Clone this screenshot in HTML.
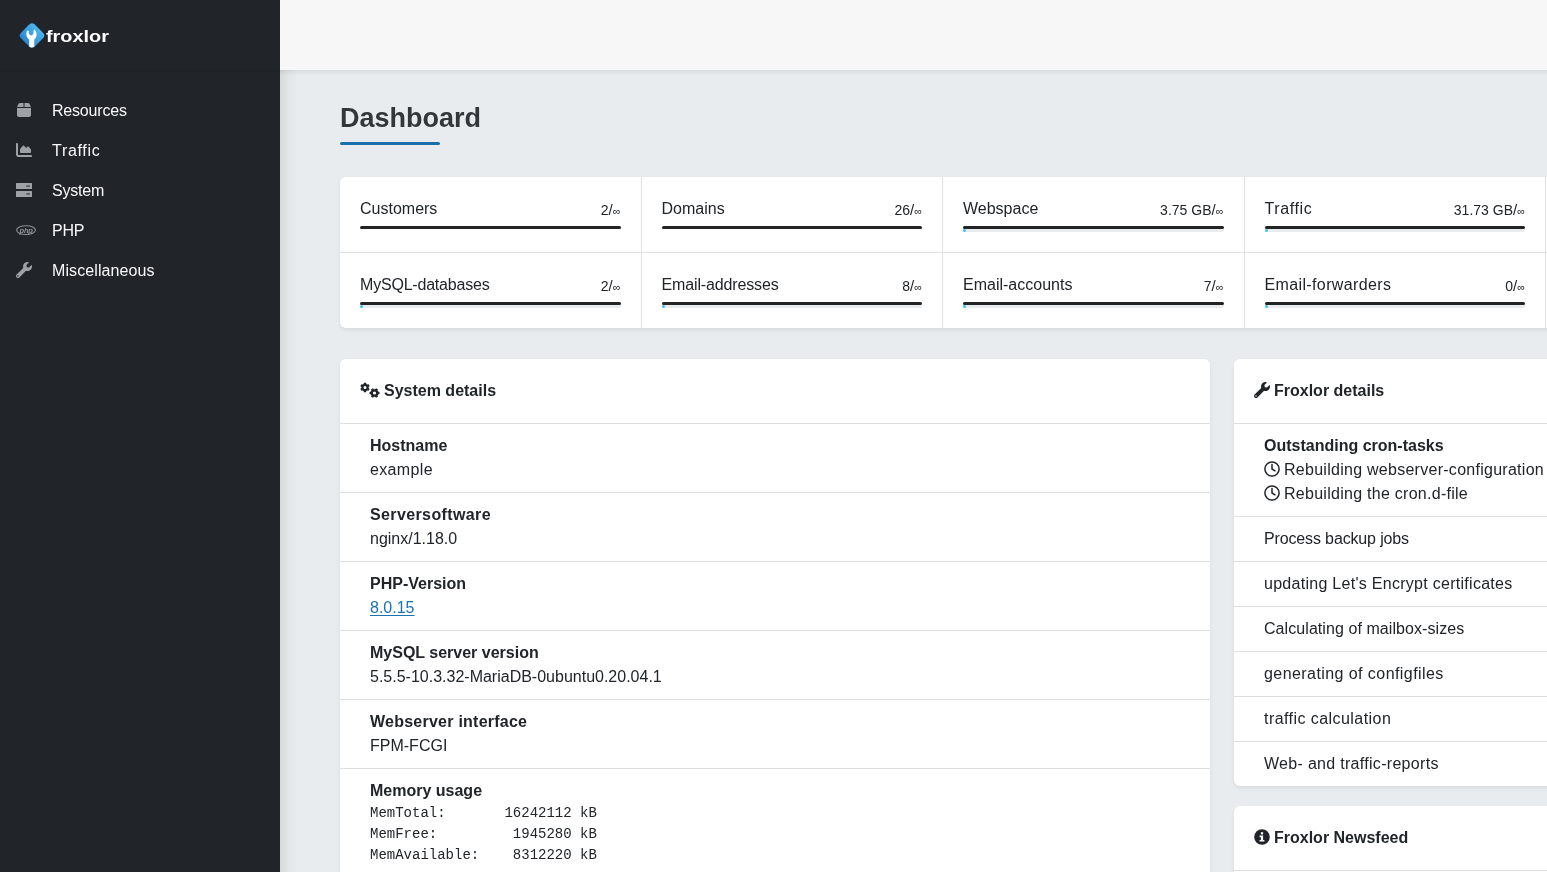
<!DOCTYPE html>
<html><head><meta charset="utf-8">
<style>
*{box-sizing:border-box;margin:0;padding:0}
html,body{width:1547px;height:872px;overflow:hidden}
body{font-family:"Liberation Sans",sans-serif;font-size:16px;line-height:24px;color:#212529;background:#e9ecef;position:relative}
#side{position:absolute;left:0;top:0;width:280px;height:872px;background:#212529}
#side .brand{position:absolute;left:0;top:0;width:280px;height:70px;background:#212529;box-shadow:0 1px 2px rgba(0,0,0,.12)}
#logo{position:absolute;left:16px;top:20px}
#logotext{position:absolute;left:46px;top:27px;color:#fff;font-weight:bold;font-size:17px;line-height:20px;letter-spacing:0px;transform:scaleX(1.17);transform-origin:0 0}
.nav{position:absolute;left:0;width:280px;height:40px}
.nav .ic{position:absolute;left:16px;top:0;width:16px;height:16px}
.nav .tx{position:absolute;left:52px;top:1px;letter-spacing:-0.2px;color:#f8f9fa;font-size:16px;line-height:24px}
#top{position:absolute;left:280px;top:0;width:1267px;height:70px;background:#f7f7f7}
#mainshadow{position:absolute;left:280px;top:70px;width:18px;height:802px;background:linear-gradient(90deg,rgba(0,0,0,.075),rgba(0,0,0,.03) 40%,rgba(0,0,0,0))}
#topshadow{position:absolute;left:280px;top:70px;width:1267px;height:5px;background:linear-gradient(180deg,rgba(0,0,0,.07),rgba(0,0,0,0))}
h1{position:absolute;left:340px;top:101.5px;font-size:27px;line-height:32px;font-weight:bold;color:#33373b;letter-spacing:0px}
#uline{position:absolute;left:340px;top:142px;width:100px;height:3px;border-radius:2px;background:#1b6fab}
.card{position:absolute;background:#fff;border-radius:6px;box-shadow:0 2px 4px rgba(0,0,0,.075)}
#stats{left:340px;top:177px;width:1260px;height:151px;overflow:hidden}
.cell{position:absolute;width:301.5px;height:75px;padding:20px}
.cell .lbl{position:absolute;left:20px;top:20px;font-size:16px;line-height:24px;color:#212529}
.cell .val{position:absolute;right:21px;top:20.5px;font-size:14px;line-height:24px;color:#212529}
.cell .bar{position:absolute;left:20px;right:21px;top:49px;height:3px;border-radius:2px;background:#242424}
.cell .prog{position:absolute;left:20px;right:21px;top:52px;height:3px;background:#e9ecef;border-radius:0 0 2px 2px}
.cell .prog i{position:absolute;left:0;top:0;width:3px;height:3px;background:#3ec4f5;border-radius:2px}
.sl{font-size:15px}.inf{font-size:11px}
.vl{position:absolute;top:0;width:1px;height:151px;background:#dee2e6}
.hl{position:absolute;left:0;width:100%;height:1px;background:#dee2e6}
#sys{left:340px;top:359px;width:870px;height:560px}
#frox{left:1234px;top:359px;width:423px;height:427px}
#news{left:1234px;top:806px;width:423px;height:200px}
.chead{position:absolute;left:20px;top:20px;font-weight:bold;font-size:16px;line-height:24px;white-space:nowrap}
.row{position:absolute;left:0;width:100%;border-top:1px solid rgba(0,0,0,.125)}
.row .in{position:absolute;left:30px;top:10px;white-space:nowrap}
.row b{display:block;font-weight:bold}
a{color:#1c72b0;text-decoration:underline;text-underline-offset:2px}
pre{font-family:"Liberation Mono",monospace;font-size:14px;line-height:21px;color:#212529}
</style></head><body><div id="wrap" style="position:absolute;left:0;top:0;width:1547px;height:872px;will-change:transform">
<div id="side">
  <div class="brand"></div>
  <svg id="logo" width="32" height="32" viewBox="0 0 32 32">
    <defs><linearGradient id="lg" x1="0" y1="0" x2="0" y2="1"><stop offset="0" stop-color="#4cb4ee"/><stop offset="1" stop-color="#2b86cc"/></linearGradient></defs>
    <rect x="6.25" y="5.75" width="19.5" height="19.5" rx="4" transform="rotate(45 16 15.5)" fill="url(#lg)"/>
    <path d="M11.4 10.6C10 12.5 9.6 17 13.2 19.5L13.2 26.8Q15.7 28.4 18.3 26.8L18.3 19.5C21.5 17 21.3 12 18.3 9.2L17.6 10.8C17.8 13 17 15.4 15.2 15.4C13.4 15.4 12.6 13 12.8 11Z" fill="#fff"/>
  </svg>
  <div id="logotext">froxlor</div>
  <div class="nav" style="top:98px"><svg class="ic" width="14" height="16" viewBox="0 0 448 512" style="left:16px;top:4px"><path fill="#9ea1a6" d="M50.7 58.5L0 160H208V32H93.7C75.5 32 58.9 42.3 50.7 58.5zM240 160H448L397.3 58.5C389.1 42.3 372.5 32 354.3 32H240V160zm208 32H0V416c0 35.3 28.7 64 64 64H384c35.3 0 64-28.7 64-64V192z"/></svg><div class="tx">Resources</div></div>
  <div class="nav" style="top:138px"><svg class="ic" width="16" height="16" viewBox="0 0 512 512" style="left:16px;top:4px"><path fill="#9ea1a6" d="M64 64c0-17.7-14.3-32-32-32S0 46.3 0 64V400c0 44.2 35.8 80 80 80H480c17.7 0 32-14.3 32-32s-14.3-32-32-32H80c-8.8 0-16-7.2-16-16V64zm96 288H448c17.7 0 32-14.3 32-32V251.8c0-7.6-2.7-15-7.7-20.8l-65.8-76.8c-12.1-14.2-33.7-15-46.9-1.8l-21 21c-10 10-26.4 9.2-35.4-1.6l-39.2-47c-12.6-15.1-35.7-15.4-48.7-.6L135.9 215c-5.1 5.8-7.9 13.3-7.9 21.1v84c0 17.7 14.3 32 32 32z"/></svg><div class="tx" style="letter-spacing:0.7px">Traffic</div></div>
  <div class="nav" style="top:178px"><svg class="ic" width="16" height="16" viewBox="0 0 16 16" style="left:16px;top:4px"><path fill="#9ea1a6" d="M0.5 1H15.5A.5.5 0 0 1 16 1.5V6.5A.5.5 0 0 1 15.5 7H.5A.5.5 0 0 1 0 6.5V1.5A.5.5 0 0 1 .5 1zM.5 9H15.5A.5.5 0 0 1 16 9.5V14.5A.5.5 0 0 1 15.5 15H.5A.5.5 0 0 1 0 14.5V9.5A.5.5 0 0 1 .5 9z"/><path fill="#55585d" d="M10.3 3.2H13.9V4.9H10.3zM10.3 11.1H13.9V12.8H10.3z"/></svg><div class="tx">System</div></div>
  <div class="nav" style="top:218px"><svg class="ic" width="20" height="11" viewBox="0 0 20 11" style="left:16px;top:6.5px;width:20px;height:11px"><ellipse cx="10" cy="5.1" rx="9.4" ry="4.4" fill="none" stroke="#8e9196" stroke-width="1.1"/><text x="10.2" y="7.6" text-anchor="middle" font-family="Liberation Sans" font-style="italic" font-weight="bold" font-size="7.5" fill="#8e9196" letter-spacing="-0.2">php</text></svg><div class="tx">PHP</div></div>
  <div class="nav" style="top:258px"><svg class="ic" width="16" height="16" viewBox="0 0 512 512" style="left:16px;top:4px"><path fill="#9ea1a6" d="M507.73 109.1c-2.24-9.030-13.54-12.09-20.12-5.51l-74.36 74.36-67.88-11.31-11.31-67.88 74.36-74.36c6.62-6.62 3.43-17.9-5.66-20.16-47.38-11.74-99.55.91-136.58 37.93-39.64 39.64-50.55 97.1-34.05 147.2L18.74 402.76c-24.99 24.99-24.99 65.51 0 90.5 24.99 24.99 65.51 24.99 90.5 0l213.21-213.21c50.12 16.71 107.470 5.68 147.37-34.22 37.07-37.07 49.7-89.32 37.91-136.73zM64 472c-13.25 0-24-10.75-24-24 0-13.26 10.75-24 24-24s24 10.74 24 24c0 13.25-10.75 24-24 24z"/></svg><div class="tx" style="letter-spacing:0.1px">Miscellaneous</div></div>
</div>
<div id="top"></div>
<div id="mainshadow"></div><div id="topshadow"></div>
<h1>Dashboard</h1>
<div id="uline"></div>

<div class="card" id="stats">
  <div class="cell" style="left:0;top:0"><div class="lbl">Customers</div><div class="val">2<span class="sl">/</span><span class="inf">∞</span></div><div class="bar"></div></div>
  <div class="cell" style="left:301.5px;top:0"><div class="lbl">Domains</div><div class="val">26<span class="sl">/</span><span class="inf">∞</span></div><div class="bar"></div></div>
  <div class="cell" style="left:603px;top:0"><div class="lbl">Webspace</div><div class="val">3.75 GB<span class="sl">/</span><span class="inf">∞</span></div><div class="bar"></div><div class="prog"><i></i></div></div>
  <div class="cell" style="left:904.5px;top:0"><div class="lbl" style="letter-spacing:0.6px">Traffic</div><div class="val">31.73 GB<span class="sl">/</span><span class="inf">∞</span></div><div class="bar"></div><div class="prog"><i></i></div></div>
  <div class="cell" style="left:0;top:76px"><div class="lbl" style="letter-spacing:-0.2px">MySQL-databases</div><div class="val">2<span class="sl">/</span><span class="inf">∞</span></div><div class="bar"></div><div class="prog"><i></i></div></div>
  <div class="cell" style="left:301.5px;top:76px"><div class="lbl" style="letter-spacing:-0.14px">Email-addresses</div><div class="val">8<span class="sl">/</span><span class="inf">∞</span></div><div class="bar"></div><div class="prog"><i></i></div></div>
  <div class="cell" style="left:603px;top:76px"><div class="lbl">Email-accounts</div><div class="val">7<span class="sl">/</span><span class="inf">∞</span></div><div class="bar"></div><div class="prog"><i></i></div></div>
  <div class="cell" style="left:904.5px;top:76px"><div class="lbl" style="letter-spacing:0.37px">Email-forwarders</div><div class="val">0<span class="sl">/</span><span class="inf">∞</span></div><div class="bar"></div><div class="prog"><i></i></div></div>
  <div class="hl" style="top:75px"></div>
  <div class="vl" style="left:301px"></div>
  <div class="vl" style="left:602px"></div>
  <div class="vl" style="left:904px"></div>
  <div class="vl" style="left:1205px"></div>
</div>

<div class="card" id="sys">
  <svg style="position:absolute;left:20px;top:23px" width="21" height="17" viewBox="0 0 21 17"><g fill="#212529" fill-rule="evenodd"><path d="M3.61 2.07L3.93 0.72L6.07 0.72L6.39 2.07L7.28 2.58L8.61 2.18L9.68 4.03L8.66 4.99L8.66 6.01L9.68 6.97L8.61 8.82L7.28 8.42L6.39 8.93L6.07 10.28L3.93 10.28L3.61 8.93L2.72 8.42L1.39 8.82L0.32 6.97L1.34 6.01L1.34 4.99L0.32 4.03L1.39 2.18L2.72 2.58ZM3.50 5.50a1.50 1.50 0 1 0 3.00 0a1.50 1.50 0 1 0 -3.00 0ZM18.11 9.54L19.48 9.89L19.48 12.11L18.11 12.46L17.58 13.40L17.95 14.75L16.03 15.87L15.04 14.86L13.96 14.86L12.97 15.87L11.05 14.75L11.42 13.40L10.89 12.46L9.52 12.11L9.52 9.89L10.89 9.54L11.42 8.60L11.05 7.25L12.97 6.13L13.96 7.14L15.04 7.14L16.03 6.13L17.95 7.25L17.58 8.60ZM12.90 11.00a1.60 1.60 0 1 0 3.20 0a1.60 1.60 0 1 0 -3.20 0Z"/></g></svg><div class="chead" style="left:44px">System details</div>
  <div class="row" style="top:64px;height:69px"><div class="in"><b>Hostname</b><span style="letter-spacing:0.35px">example</span></div></div>
  <div class="row" style="top:133px;height:69px"><div class="in"><b style="letter-spacing:0.38px">Serversoftware</b>nginx/1.18.0</div></div>
  <div class="row" style="top:202px;height:69px"><div class="in"><b>PHP-Version</b><a>8.0.15</a></div></div>
  <div class="row" style="top:271px;height:69px"><div class="in"><b>MySQL server version</b>5.5.5-10.3.32-MariaDB-0ubuntu0.20.04.1</div></div>
  <div class="row" style="top:340px;height:69px"><div class="in"><b style="letter-spacing:0.24px">Webserver interface</b>FPM-FCGI</div></div>
  <div class="row" style="top:409px;height:200px"><div class="in"><b>Memory usage</b><pre>MemTotal:       16242112 kB
MemFree:         1945280 kB
MemAvailable:    8312220 kB</pre></div></div>
</div>

<div class="card" id="frox">
  <svg style="position:absolute;left:20px;top:23px" width="16" height="16" viewBox="0 0 512 512"><path fill="#212529" d="M507.73 109.1c-2.24-9.03-13.54-12.09-20.12-5.51l-74.36 74.36-67.88-11.31-11.31-67.88 74.36-74.36c6.62-6.62 3.43-17.9-5.66-20.16-47.38-11.74-99.55.91-136.580 37.93-39.64 39.64-50.55 97.1-34.05 147.2L18.74 402.76c-24.99 24.99-24.99 65.51 0 90.5 24.99 24.99 65.51 24.99 90.5 0l213.21-213.21c50.12 16.71 107.47 5.68 147.37-34.22 37.07-37.07 49.7-89.32 37.91-136.73zM64 472c-13.25 0-24-10.75-24-24 0-13.26 10.75-24 24-24s24 10.74 24 24c0 13.25-10.75 24-24 24z"/></svg><div class="chead" style="left:40px">Froxlor details</div>
  <div class="row" style="top:64px;height:94px"><div class="in"><b>Outstanding cron-tasks</b><svg style="display:inline-block;vertical-align:-2px;margin-right:4px" width="16" height="16" viewBox="0 0 16 16"><circle cx="8" cy="8" r="7.1" fill="none" stroke="#212529" stroke-width="1.5"/><path d="M8 3.6V8L11 9.9" fill="none" stroke="#212529" stroke-width="1.5" stroke-linecap="round"/></svg><span style="letter-spacing:0.27px">Rebuilding webserver-configuration</span><br><svg style="display:inline-block;vertical-align:-2px;margin-right:4px" width="16" height="16" viewBox="0 0 16 16"><circle cx="8" cy="8" r="7.1" fill="none" stroke="#212529" stroke-width="1.5"/><path d="M8 3.6V8L11 9.9" fill="none" stroke="#212529" stroke-width="1.5" stroke-linecap="round"/></svg><span style="letter-spacing:0.27px">Rebuilding the cron.d-file</span></div></div>
  <div class="row" style="top:157px;height:45px"><div class="in" style="letter-spacing:-0.14px">Process backup jobs</div></div>
  <div class="row" style="top:202px;height:45px"><div class="in" style="letter-spacing:0.28px">updating Let's Encrypt certificates</div></div>
  <div class="row" style="top:247px;height:45px"><div class="in" style="letter-spacing:0.07px">Calculating of mailbox-sizes</div></div>
  <div class="row" style="top:292px;height:45px"><div class="in" style="letter-spacing:0.43px">generating of configfiles</div></div>
  <div class="row" style="top:337px;height:45px"><div class="in" style="letter-spacing:0.44px">traffic calculation</div></div>
  <div class="row" style="top:382px;height:45px"><div class="in" style="letter-spacing:0.30px">Web- and traffic-reports</div></div>
</div>

<div class="card" id="news">
  <svg style="position:absolute;left:20px;top:23px" width="16" height="16" viewBox="0 0 16 16"><circle cx="8" cy="8" r="7.8" fill="#212529"/><rect x="6.9" y="3.2" width="2.2" height="2.2" fill="#fff"/><path d="M5.6 6.6H9.1V11H10.4V12.6H5.6V11H6.9V8.2H5.6Z" fill="#fff"/></svg><div class="chead" style="left:40px">Froxlor Newsfeed</div>
  <div class="row" style="top:64px;height:100px"></div>
</div>
</div></body></html>
